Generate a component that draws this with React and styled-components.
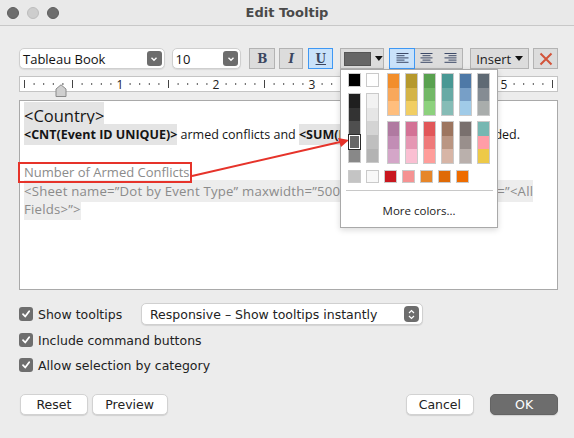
import React from "react"
import styled, { createGlobalStyle } from "styled-components"

const UI_FONT = `"DejaVu Sans", "Liberation Sans", sans-serif`
const TEXT_FONT = `"Open Sans", "Noto Sans", sans-serif`

const GlobalStyle = createGlobalStyle`
    html, body {
        margin: 0;
        padding: 0;
        background: #ececec;
    }
    body {
        font-family: ${UI_FONT};
    }
    * {
        box-sizing: border-box;
    }
`

const Window = styled.div`
    position: relative;
    width: 574px;
    height: 438px;
    background: #ececec;
    display: flex;
    flex-direction: column;
    overflow: hidden;
`

const TitleBar = styled.div`
    height: 26px;
    flex-shrink: 0;
    display: grid;
    grid-template-columns: 1fr auto 1fr;
    align-items: center;
    background: #e9e9e9;
    border-bottom: 1px solid #c8c8c8;
`

const Lights = styled.div`
    display: flex;
    gap: 8px;
    padding-left: 7px;
`

const Light = styled.span`
    width: 12px;
    height: 12px;
    border-radius: 50%;
    background: ${p => p.$dim ? "#cdcdcd" : "#6e6e6e"};
    border: 1px solid ${p => p.$dim ? "#bdbdbd" : "#5e5e5e"};
`

const Title = styled.div`
    font-size: 13px;
    font-weight: bold;
    color: #4a4a4a;
`

const Body = styled.div`
    display: flex;
    flex-direction: column;
    padding: 22px 16px 0 19px;
`

const Toolbar = styled.div`
    display: flex;
    height: 21px;
    align-items: stretch;
`

const Select = styled.div`
    width: ${p => p.$w}px;
    margin-right: ${p => p.$mr || 0}px;
    display: flex;
    align-items: center;
    justify-content: space-between;
    padding: 0 2px 0 3px;
    background: #fff;
    border: 1px solid #cfcfcf;
    border-radius: 5px;
    box-shadow: 0 1px 1px rgba(0, 0, 0, 0.08);
    font-family: ${TEXT_FONT};
    font-size: 13px;
    color: #111;
`

const ArrowBox = styled.span`
    width: 15px;
    height: 15px;
    border-radius: 3px;
    background: #6d6d6d;
    display: flex;
    align-items: center;
    justify-content: center;
`

const ToolButton = styled.div`
    width: ${p => p.$w}px;
    margin-right: ${p => p.$mr || 0}px;
    display: flex;
    align-items: center;
    justify-content: center;
    background: ${p => p.$active ? "#c9e2fa" : "#dcdcdc"};
    border: 1px solid ${p => p.$active ? "#3f98f4" : "#b3b3b3"};
    font-family: "DejaVu Serif", serif;
    font-size: 12px;
    font-weight: bold;
    font-style: ${p => p.$italic ? "italic" : "normal"};
    text-decoration: ${p => p.$under ? "underline" : "none"};
    color: #3b4660;
`

const ColorButton = styled.div`
    width: 44px;
    margin-right: 5px;
    display: flex;
    align-items: center;
    gap: 4px;
    padding-left: 3px;
    background: #dcdcdc;
    border: 1px solid #b3b3b3;
`

const ColorChip = styled.span`
    width: 28px;
    height: 14px;
    background: #666;
    border: 1px solid #555;
`

const AlignGroup = styled.div`
    display: flex;
    margin-right: 7px;
    border: 1px solid #b3b3b3;
    background: #dcdcdc;
`

const AlignButton = styled.div`
    width: 24px;
    display: flex;
    align-items: center;
    justify-content: center;
    background: ${p => p.$active ? "#c9e2fa" : "transparent"};
    outline: ${p => p.$active ? "1px solid #3f98f4" : "none"};
`

const InsertButton = styled.div`
    width: 59px;
    margin-right: 4px;
    display: flex;
    align-items: center;
    justify-content: center;
    gap: 4px;
    background: #dcdcdc;
    border: 1px solid #b3b3b3;
    font-family: ${TEXT_FONT};
    font-size: 13px;
    color: #222;
`

const CloseButton = styled.div`
    width: 25px;
    display: flex;
    align-items: center;
    justify-content: center;
    background: #dcdcdc;
    border: 1px solid #b3b3b3;
`

const RulerWrap = styled.div`
    position: relative;
    margin-top: 7px;
    height: 16px;
    background: #fff;
    border: 1px solid #c4c4c4;
`

const RulerMarks = styled.svg`
    display: block;
    overflow: visible;
`

const Thumb = styled.svg`
    position: absolute;
    left: 35px;
    top: 7px;
`

const Editor = styled.div`
    margin-top: 8px;
    height: 190px;
    background: #fff;
    border: 1px solid #a9a9a9;
    padding: 5px 4px;
    font-family: ${TEXT_FONT};
    color: #1e1e1e;
`

const Line = styled.div`
    height: ${p => p.$big ? 20 : 18.6}px;
    line-height: ${p => p.$big ? 20 : 18.6}px;
    font-size: ${p => p.$size || 12.5}px;
    letter-spacing: ${p => p.$spaced ? "0.2px" : "normal"};
    color: ${p => p.$muted ? "#8b8b8b" : "#151515"};
    white-space: nowrap;
`

const Tag = styled.span`
    background: ${p => p.$soft ? "#ededed" : "#e4e4e4"};
    font-weight: ${p => p.$bold ? 700 : 400};
    padding: 2px 0;
`

const Marked = styled.span`
    position: relative;
    &::after {
        content: "";
        position: absolute;
        left: -6px;
        right: -3px;
        top: -1px;
        bottom: -2px;
        border: 2px solid #e6332a;
    }
`

const Options = styled.div`
    display: flex;
    flex-direction: column;
    margin-top: 13px;
`

const OptionRow = styled.div`
    display: grid;
    grid-template-columns: ${p => p.$withSelect ? "122px 282px" : "auto"};
    align-items: center;
    height: 22px;
    margin-bottom: ${p => p.$gap || 0}px;
`

const Check = styled.label`
    display: flex;
    align-items: center;
    gap: 5px;
    font-size: 12.5px;
    color: #222;
`

const Box = styled.span`
    width: 14px;
    height: 14px;
    border-radius: 3px;
    background: #6e6e6e;
    display: flex;
    align-items: center;
    justify-content: center;
`

const Dropdown = styled.div`
    height: 22px;
    display: flex;
    align-items: center;
    justify-content: space-between;
    padding: 0 3px 0 8px;
    background: #fff;
    border: 1px solid #d0d0d0;
    border-radius: 5px;
    box-shadow: 0 1px 1px rgba(0, 0, 0, 0.1);
    font-size: 12.5px;
    color: #222;
`

const Stepper = styled.span`
    width: 15px;
    height: 16px;
    border-radius: 4px;
    background: #6d6d6d;
    display: flex;
    align-items: center;
    justify-content: center;
`

const Footer = styled.div`
    display: flex;
    align-items: center;
    gap: 4px;
    margin-top: 18px;
    padding-left: 1px;
`

const Button = styled.div`
    width: ${p => p.$w}px;
    height: 21px;
    margin-left: ${p => p.$ml || 0}px;
    display: flex;
    align-items: center;
    justify-content: center;
    border-radius: 5px;
    background: ${p => p.$primary ? "#6d6d6d" : "#fff"};
    color: ${p => p.$primary ? "#fff" : "#222"};
    border: 1px solid ${p => p.$primary ? "#646464" : "#d2d2d2"};
    box-shadow: 0 1px 1px rgba(0, 0, 0, 0.12);
    font-size: 12.5px;
`

const Popup = styled.div`
    position: absolute;
    left: 340px;
    top: 69px;
    width: 158px;
    height: 159px;
    background: #fff;
    border: 1px solid #a9a9a9;
    box-shadow: 0 2px 6px rgba(0, 0, 0, 0.15);
    padding: 3px 0 0 7px;
    display: flex;
    flex-direction: column;
`

const Palette = styled.div`
    display: flex;
    gap: 5px;
`

const PalColumn = styled.div`
    display: flex;
    flex-direction: column;
    gap: ${p => p.$gap}px;
    margin-right: ${p => p.$mr || 0}px;
`

const Strip = styled.div`
    width: 13px;
    display: flex;
    flex-direction: column;
    border: 1px solid #cacaca;
`

const Cell = styled.span`
    position: relative;
    display: block;
    height: ${p => p.$h || 13.7}px;
    background-color: ${p => p.$c};
    border: ${p => p.$sel ? "1px solid #fff" : "none"};
    outline: ${p => p.$sel ? "1px solid #2a2a2a" : "none"};
    z-index: ${p => p.$sel ? 1 : 0};
`

const SmallRow = styled.div`
    display: flex;
    gap: 5px;
    margin-top: 6px;
`

const Small = styled.span`
    width: 13px;
    height: 13px;
    background: ${p => p.$c};
    border: 1px solid #cacaca;
`

const Divider = styled.div`
    margin: 7px 4px 0 -2px;
    height: 1px;
    background: #c8c8c8;
`

const MoreColors = styled.div`
    margin: 12px 0 0 -7px;
    text-align: center;
    font-family: ${TEXT_FONT};
    font-size: 11.5px;
    color: #222;
`

const Annotation = styled.svg`
    position: absolute;
    left: 0;
    top: 0;
    pointer-events: none;
`

const Chevron = () => (
    <svg width="8" height="6" viewBox="0 0 8 6">
        <path d="M1.5 1.8 L4 4.2 L6.5 1.8" fill="none" stroke="#fff" strokeWidth="1.4" />
    </svg>
)

const Caret = () => (
    <svg width="8" height="5" viewBox="0 0 8 5">
        <path d="M0 0 H8 L4 5 Z" fill="#111" />
    </svg>
)

const AlignIcon = ({ mode }) => {
    const widths = [12, 8, 12, 8, 12]
    return (
        <svg width="13" height="11" viewBox="0 0 13 11">
            {widths.map((w, i) => {
                const x = mode === "left" ? 0.5 : mode === "center" ? (13 - w) / 2 : 12.5 - w
                return <rect key={i} x={x} y={i * 2.2} width={w} height="1" fill="#3d4a68" />
            })}
        </svg>
    )
}

function Ruler() {
    const ticks = []
    for (let i = 0; i <= 55; i++) {
        const x = 4 + i * 9.6
        if (i % 10 === 0 && i > 0) {
            ticks.push(<text key={i} x={x} y="11.5" fontSize="12" textAnchor="middle" fill="#222" fontFamily="Open Sans, sans-serif">{i / 10}</text>)
        } else if (i % 5 === 0) {
            ticks.push(<rect key={i} x={x} y="3" width="1" height="8" fill="#444" />)
        } else {
            ticks.push(<rect key={i} x={x} y="6" width="1" height="2" fill="#555" />)
        }
    }
    return (
        <RulerWrap>
            <RulerMarks width="537" height="14">{ticks}</RulerMarks>
            <Thumb width="12" height="13" viewBox="0 0 12 13">
                <path d="M1 5 L6 0.8 L11 5 V12.5 H1 Z" fill="#cfcfcf" stroke="#8a8a8a" />
            </Thumb>
        </RulerWrap>
    )
}

const topGroup = [
    ["#f28e2b", "#f8a85b", "#ffbe7d"],
    ["#b6992d", "#d4b447", "#f1ce63"],
    ["#59a14f", "#72b866", "#8cd17d"],
    ["#499894", "#68aaa5", "#86bcb6"],
    ["#4e79a7", "#779fc7", "#a0cbe8"],
    ["#5f6a74", "#858c93", "#a9adac"],
]

const bottomGroup = [
    ["#b07aa1", "#c28db5", "#d4a6c8"],
    ["#d37295", "#e597b3", "#fabfd2"],
    ["#e15759", "#ef7a7a", "#ff9d9a"],
    ["#9d7660", "#ba9683", "#d7b5a6"],
    ["#79706e", "#998f8c", "#bab0ac"],
    ["#76b7b2", "#ff9da7", "#edc948"],
]

const darks = ["#1f1f1f", "#333333", "#4f4f4f", "#666666", "#888888"]
const lights = ["#f2f2f2", "#e6e6e6", "#d4d4d4", "#bfbfbf", "#b3b3b3"]
const extras = ["#c4c4c4", "#f8f8f8", "#c8171f", "#f59292", "#e6862a", "#df6a07", "#ee6c00"]

function ColorPopup() {
    return (
        <Popup>
            <Palette>
                <PalColumn $gap={6}>
                    <Strip><Cell $c="#000" $h={12} /></Strip>
                    <Strip>{darks.map((c, i) => <Cell key={c} $c={c} $sel={i === 3} />)}</Strip>
                </PalColumn>
                <PalColumn $gap={6} $mr={3}>
                    <Strip><Cell $c="#fff" $h={12} /></Strip>
                    <Strip>{lights.map(c => <Cell key={c} $c={c} />)}</Strip>
                </PalColumn>
                {topGroup.map((col, i) => (
                    <PalColumn key={i} $gap={5}>
                        <Strip>{col.map(c => <Cell key={c} $c={c} />)}</Strip>
                        <Strip>{bottomGroup[i].map(c => <Cell key={c} $c={c} />)}</Strip>
                    </PalColumn>
                ))}
            </Palette>
            <SmallRow>
                {extras.map(c => <Small key={c} $c={c} />)}
            </SmallRow>
            <Divider />
            <MoreColors>More colors...</MoreColors>
        </Popup>
    )
}

const CheckMark = () => (
    <svg width="10" height="10" viewBox="0 0 10 10">
        <path d="M2 5.2 L4.2 7.5 L8.2 2.2" fill="none" stroke="#fff" strokeWidth="1.8" strokeLinecap="round" strokeLinejoin="round" />
    </svg>
)

const CheckOption = ({ children }) => (
    <Check>
        <Box><CheckMark /></Box>
        {children}
    </Check>
)

export default function App() {
    return (
        <Window>
            <GlobalStyle />
            <TitleBar>
                <Lights>
                    <Light />
                    <Light $dim />
                    <Light />
                </Lights>
                <Title>Edit Tooltip</Title>
                <div />
            </TitleBar>
            <Body>
                <Toolbar>
                    <Select $w={146} $mr={7}>Tableau Book<ArrowBox><Chevron /></ArrowBox></Select>
                    <Select $w={70} $mr={8}>10<ArrowBox><Chevron /></ArrowBox></Select>
                    <ToolButton $w={26} $mr={4}>B</ToolButton>
                    <ToolButton $w={24} $mr={5} $italic>I</ToolButton>
                    <ToolButton $w={25} $mr={7} $under $active>U</ToolButton>
                    <ColorButton><ColorChip /><Caret /></ColorButton>
                    <AlignGroup>
                        <AlignButton $active><AlignIcon mode="left" /></AlignButton>
                        <AlignButton><AlignIcon mode="center" /></AlignButton>
                        <AlignButton><AlignIcon mode="right" /></AlignButton>
                    </AlignGroup>
                    <InsertButton>Insert<Caret /></InsertButton>
                    <CloseButton>
                        <svg width="14" height="14" viewBox="0 0 14 14">
                            <path d="M1.5 1.5 L12.5 12.5 M12.5 1.5 L1.5 12.5" stroke="#d2543a" strokeWidth="2" />
                        </svg>
                    </CloseButton>
                </Toolbar>
                <Ruler />
                <Editor>
                    <Line $big $size={16.5}><Tag>&lt;Country&gt;</Tag></Line>
                    <Line>
                        <Tag $bold>&lt;CNT(Event ID UNIQUE)&gt;</Tag> armed conflicts and <Tag $bold>&lt;SUM(Fatalities)&gt;</Tag> fatalities recorded.
                    </Line>
                    <Line>&nbsp;</Line>
                    <Line $muted $size={13}><Marked>Number of Armed Conflicts</Marked></Line>
                    <Line $muted $size={13.2} $spaced><Tag $soft>&lt;Sheet name=”Dot by Event Type” maxwidth=”500” maxheight=”1000” filter=”&lt;All</Tag></Line>
                    <Line $muted $size={13.2} $spaced><Tag $soft>Fields&gt;”&gt;</Tag></Line>
                </Editor>
                <Options>
                    <OptionRow $withSelect $gap={4}>
                        <CheckOption>Show tooltips</CheckOption>
                        <Dropdown>
                            Responsive – Show tooltips instantly
                            <Stepper>
                                <svg width="7" height="11" viewBox="0 0 7 11">
                                    <path d="M1 4 L3.5 1.5 L6 4 M1 7 L3.5 9.5 L6 7" fill="none" stroke="#fff" strokeWidth="1.2" />
                                </svg>
                            </Stepper>
                        </Dropdown>
                    </OptionRow>
                    <OptionRow $gap={3}>
                        <CheckOption>Include command buttons</CheckOption>
                    </OptionRow>
                    <OptionRow>
                        <CheckOption>Allow selection by category</CheckOption>
                    </OptionRow>
                </Options>
                <Footer>
                    <Button $w={68}>Reset</Button>
                    <Button $w={76}>Preview</Button>
                    <Button $w={69} $ml={234}>Cancel</Button>
                    <Button $w={68} $ml={12} $primary>OK</Button>
                </Footer>
            </Body>
            <ColorPopup />
            <Annotation width="574" height="438">
                <line x1="192" y1="176" x2="340" y2="142" stroke="#e6332a" strokeWidth="2" />
                <path d="M349 140 L338 138 L341 147 Z" fill="#e6332a" />
            </Annotation>
        </Window>
    )
}
